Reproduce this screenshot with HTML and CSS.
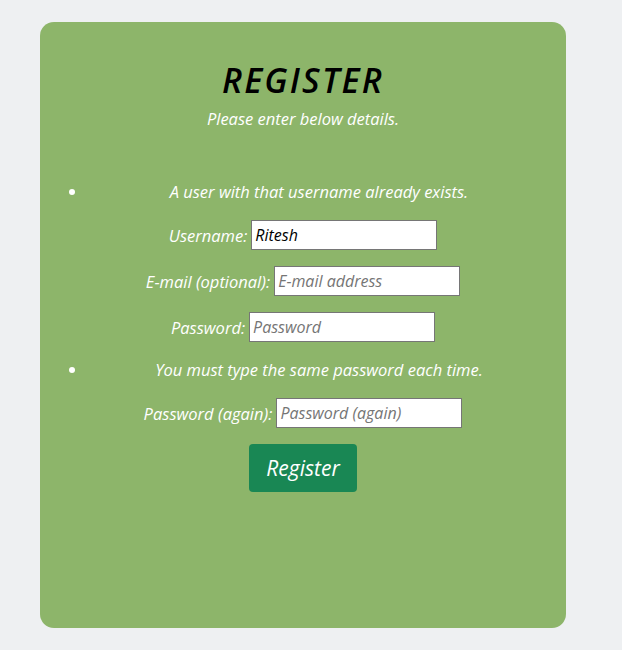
FILE: index.html
```html
<!DOCTYPE html>
<html lang="en">
<head>
<meta charset="utf-8">
<title>Register</title>
<link rel="stylesheet" href="styles.css">
</head>
<body>
<div class="card">
  <h1 class="title">REGISTER</h1>
  <p class="subtitle">Please enter below details.</p>
  <form class="form">
    <ul class="errors"><li>A user with that username already exists.</li></ul>
    <p class="row"><label for="u">Username:</label> <input id="u" class="field" type="text" value="Ritesh"></p>
    <p class="row"><label for="e">E-mail (optional):</label> <input id="e" class="field" type="text" placeholder="E-mail address"></p>
    <p class="row"><label for="p1">Password:</label> <input id="p1" class="field" type="password" placeholder="Password"></p>
    <ul class="errors"><li>You must type the same password each time.</li></ul>
    <p class="row"><label for="p2">Password (again):</label> <input id="p2" class="field" type="password" placeholder="Password (again)"></p>
    <div class="actions"><button type="button" class="btn">Register</button></div>
  </form>
</div>
</body>
</html>
```
FILE: styles.css
```css
html, body {
  margin: 0;
  padding: 0;
  background: #eef0f2;
}
body {
  font-family: "Open Sans", "Liberation Sans", sans-serif;
  font-style: italic;
  color: #fff;
}
.card {
  box-sizing: border-box;
  width: 526px;
  height: 606px;
  margin: 22px 0 0 40px;
  padding: 16px;
  background: #8db56a;
  border-radius: 14px;
  text-align: center;
}
.title {
  margin: 22px 0 0;
  font-size: 34px;
  line-height: 40px;
  font-weight: 600;
  color: #000;
  letter-spacing: 2.2px;
}
.subtitle {
  margin: 9px 0 0;
  font-size: 16.5px;
  line-height: 20px;
}
.form {
  margin-top: 51px;
  display: flex;
  flex-direction: column;
  gap: 16px;
}
.errors {
  margin: 0;
  padding-left: 32px;
  list-style: disc outside;
}
.errors li {
  font-size: 16.5px;
  line-height: 24px;
  text-align: center;
}
.row {
  margin: 0;
  height: 30px;
  display: flex;
  justify-content: center;
  align-items: center;
  gap: 4px;
  font-size: 16.5px;
}
.field {
  box-sizing: border-box;
  width: 186px;
  height: 30px;
  border: 1px solid #767676;
  border-radius: 0;
  padding: 1px 3px;
  font-family: inherit;
  font-style: italic;
  font-size: 16px;
  color: #000;
  background: #fff;
}
.field::placeholder {
  color: #757575;
}
.actions {
  display: flex;
  justify-content: center;
}
.btn {
  width: 108px;
  height: 48px;
  border: none;
  border-radius: 4px;
  background: #198754;
  color: #fff;
  font-family: inherit;
  font-style: italic;
  font-size: 21px;
}
```
